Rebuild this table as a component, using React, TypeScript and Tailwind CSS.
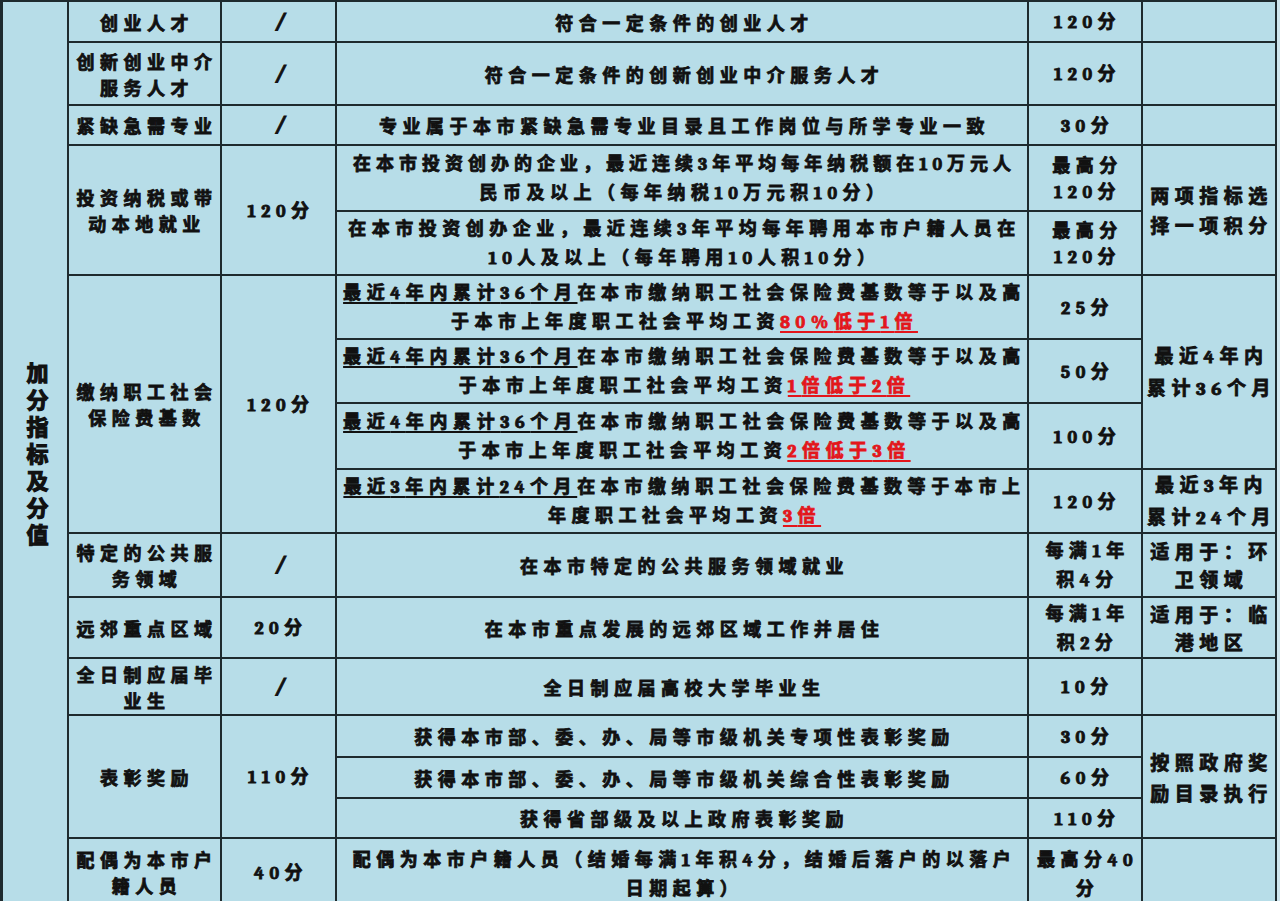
import React from "react";

type P = { className?: string; children?: React.ReactNode };

function d(s: string): React.ReactNode {
  const parts = s.split(/([0-9%]+)/);
  return parts.map((p, i) =>
    i % 2 === 1 ? (
      <span key={i} className="font-serif">
        {p}
      </span>
    ) : (
      <React.Fragment key={i}>{p}</React.Fragment>
    )
  );
}

function C({ className = "", children }: P) {
  return (
    <div
      className={`bg-[#b7dde8] flex flex-col items-center justify-center text-center whitespace-nowrap pl-[5px] tracking-[5.5px] ${className}`}
    >
      {typeof children === "string" ? <span>{d(children)}</span> : children}
    </div>
  );
}

function L({ className = "", children }: P) {
  return <span className={className}>{typeof children === "string" ? d(children) : children}</span>;
}

function U({ children }: P) {
  return (
    <span className="underline decoration-2 underline-offset-[3px]">
      {typeof children === "string" ? d(children) : children}
    </span>
  );
}

function R({ children }: P) {
  return (
    <span className="text-[#e3161b] underline decoration-2 underline-offset-[3px] decoration-[#e3161b]">
      {typeof children === "string" ? d(children) : children}
    </span>
  );
}

function Slash() {
  return <span className="font-['DejaVu_Sans'] italic text-[21px] font-black tracking-normal">/</span>;
}

export default function App() {
  return (
    <div className="w-[1280px] h-[901px] overflow-hidden bg-[#cfe6ee]">
      <div className="grid w-[1277px] grid-cols-[64px_151px_113px_690px_112px_132px] grid-rows-[39px_61px_38px_64px_62px_62px_62px_64px_62px_62px_59px_55px_40px_39px_38px_66px] gap-[2px] bg-[#1e2a2e] pt-[2px] pl-[3px] pr-[2px] text-[18px] leading-[26px] font-bold text-[#111] font-['Noto_Sans_CJK_SC'] [-webkit-text-stroke:0.8px_currentColor]">
        {/* column 1 */}
        <C className="row-span-16 pl-0 tracking-normal">
          <span className="[writing-mode:vertical-rl] text-[22px] leading-[26px] tracking-[5px] pt-[5px] [-webkit-text-stroke:1.2px_currentColor]">
            加分指标及分值
          </span>
        </C>

        {/* row 1 */}
        <C>创业人才</C>
        <C className="pl-0"><Slash /></C>
        <C>符合一定条件的创业人才</C>
        <C>120分</C>
        <C />

        {/* row 2 */}
        <C>
          <L>创新创业中介</L>
          <L>服务人才</L>
        </C>
        <C className="pl-0"><Slash /></C>
        <C>符合一定条件的创新创业中介服务人才</C>
        <C>120分</C>
        <C />

        {/* row 3 */}
        <C>紧缺急需专业</C>
        <C className="pl-0"><Slash /></C>
        <C>专业属于本市紧缺急需专业目录且工作岗位与所学专业一致</C>
        <C>30分</C>
        <C />

        {/* row 4 */}
        <C className="row-span-2">
          <L>投资纳税或带</L>
          <L>动本地就业</L>
        </C>
        <C className="row-span-2">120分</C>
        <C>
          <L className="tracking-[5px]">在本市投资创办的企业，最近连续3年平均每年纳税额在10万元人</L>
          <L>民币及以上（每年纳税10万元积10分）</L>
        </C>
        <C>
          <L>最高分</L>
          <L>120分</L>
        </C>
        <C className="row-span-2 leading-[30px] text-[19px]">
          <L>两项指标选</L>
          <L>择一项积分</L>
        </C>
        <C>
          <L>在本市投资创办企业，最近连续3年平均每年聘用本市户籍人员在</L>
          <L>10人及以上（每年聘用10人积10分）</L>
        </C>
        <C>
          <L>最高分</L>
          <L>120分</L>
        </C>

        {/* row 5 */}
        <C className="row-span-4">
          <L>缴纳职工社会</L>
          <L>保险费基数</L>
        </C>
        <C className="row-span-4">120分</C>
        <C>
          <span className="tracking-[5.6px]">
            <U>最近4年内累计36个月</U>在本市缴纳职工社会保险费基数等于以及高
          </span>
          <span>
            于本市上年度职工社会平均工资<R>80%低于1倍</R>
          </span>
        </C>
        <C>25分</C>
        <C className="row-span-3 leading-[30px] text-[19px]">
          <L>最近4年内</L>
          <L>累计36个月</L>
        </C>
        <C>
          <span className="tracking-[5.6px]">
            <U>最近4年内累计36个月</U>在本市缴纳职工社会保险费基数等于以及高
          </span>
          <span>
            于本市上年度职工社会平均工资<R>1倍低于2倍</R>
          </span>
        </C>
        <C>50分</C>
        <C>
          <span className="tracking-[5.6px]">
            <U>最近4年内累计36个月</U>在本市缴纳职工社会保险费基数等于以及高
          </span>
          <span>
            于本市上年度职工社会平均工资<R>2倍低于3倍</R>
          </span>
        </C>
        <C>100分</C>
        <C>
          <span className="tracking-[5.6px]">
            <U>最近3年内累计24个月</U>在本市缴纳职工社会保险费基数等于本市上
          </span>
          <span>
            年度职工社会平均工资<R>3倍</R>
          </span>
        </C>
        <C>120分</C>
        <C className="leading-[30px] text-[19px]">
          <L>最近3年内</L>
          <L>累计24个月</L>
        </C>

        {/* row 6 */}
        <C>
          <L>特定的公共服</L>
          <L>务领域</L>
        </C>
        <C className="pl-0"><Slash /></C>
        <C>在本市特定的公共服务领域就业</C>
        <C>
          <L>每满1年</L>
          <L>积4分</L>
        </C>
        <C className="leading-[28px] text-[19px] tracking-[4px]">
          <L>适用于：环</L>
          <L>卫领域</L>
        </C>

        {/* row 7 */}
        <C>远郊重点区域</C>
        <C>20分</C>
        <C>在本市重点发展的远郊区域工作并居住</C>
        <C>
          <L>每满1年</L>
          <L>积2分</L>
        </C>
        <C className="leading-[28px] text-[19px] tracking-[4px]">
          <L>适用于：临</L>
          <L>港地区</L>
        </C>

        {/* row 8 */}
        <C>
          <L>全日制应届毕</L>
          <L>业生</L>
        </C>
        <C className="pl-0"><Slash /></C>
        <C>全日制应届高校大学毕业生</C>
        <C>10分</C>
        <C />

        {/* row 9 */}
        <C className="row-span-3">表彰奖励</C>
        <C className="row-span-3">110分</C>
        <C>获得本市部、委、办、局等市级机关专项性表彰奖励</C>
        <C>30分</C>
        <C className="row-span-3 leading-[31px] text-[19px]">
          <L>按照政府奖</L>
          <L>励目录执行</L>
        </C>
        <C>获得本市部、委、办、局等市级机关综合性表彰奖励</C>
        <C>60分</C>
        <C>获得省部级及以上政府表彰奖励</C>
        <C>110分</C>

        {/* row 10 */}
        <C>
          <L>配偶为本市户</L>
          <L>籍人员</L>
        </C>
        <C>40分</C>
        <C>
          <L>配偶为本市户籍人员（结婚每满1年积4分，结婚后落户的以落户</L>
          <L>日期起算）</L>
        </C>
        <C>
          <L>最高分40</L>
          <L>分</L>
        </C>
        <C />
      </div>
    </div>
  );
}
